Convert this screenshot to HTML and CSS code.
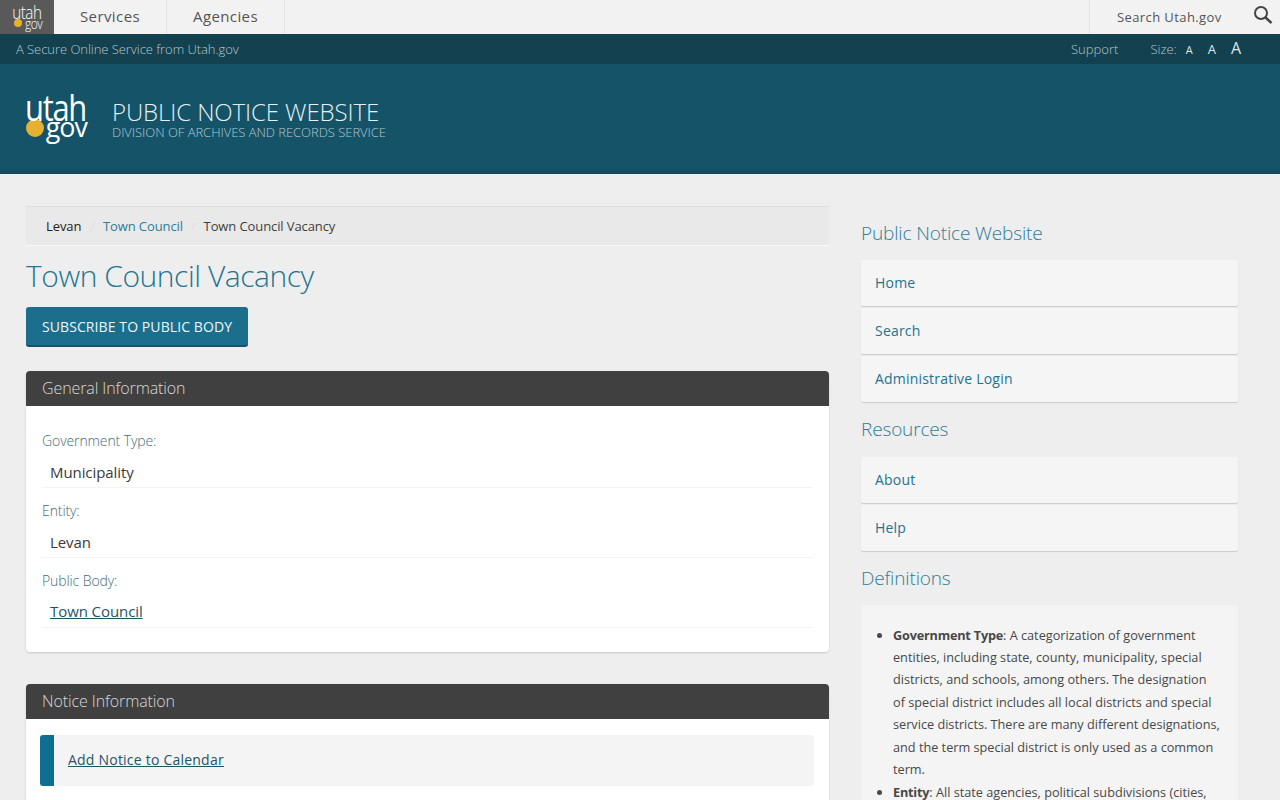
FILE: index.html
```html
<!DOCTYPE html>
<html lang="en">
<head>
  <meta charset="UTF-8">
  <title>Town Council Vacancy</title>
  <link rel="stylesheet" href="styles.css">
</head>
<body>
  <div class="topbar">
    <a class="top-logo" href="#">
      <span class="top-utah">utah</span>
      <span class="top-gov"><i class="dot"></i><span>gov</span></span>
    </a>
    <a class="top-link top-services" href="#">Services</a>
    <a class="top-link top-agencies" href="#">Agencies</a>
    <div class="top-search">
      <span>Search Utah.gov</span>
      <svg class="search-icon" width="20" height="20" viewBox="0 0 20 20">
        <circle cx="8" cy="8" r="6" fill="none" stroke="#444" stroke-width="2"/>
        <path d="M12.5 12.5L18.5 18" stroke="#444" stroke-width="2.4" fill="none"/>
      </svg>
    </div>
  </div>

  <div class="subbar">
    <span class="secure">A Secure Online Service from Utah.gov</span>
    <a class="support" href="#">Support</a>
    <span class="size-label">Size:</span>
    <a class="size size-s" href="#">A</a>
    <a class="size size-m" href="#">A</a>
    <a class="size size-l" href="#">A</a>
  </div>

  <header class="site-header">
    <a class="logo" href="#">
      <span class="logo-utah">utah</span>
      <span class="logo-gov"><i class="logo-dot"></i><span>gov</span></span>
    </a>
    <div class="site-title">
      <h1>PUBLIC NOTICE WEBSITE</h1>
      <p>DIVISION OF ARCHIVES AND RECORDS SERVICE</p>
    </div>
  </header>

  <div class="page">
    <main class="main">
      <ul class="breadcrumb">
        <li class="crumb-first">Levan</li>
        <li><a href="#">Town Council</a></li>
        <li>Town Council Vacancy</li>
      </ul>

      <h2 class="page-title">Town Council Vacancy</h2>
      <a class="btn" href="#">SUBSCRIBE TO PUBLIC BODY</a>

      <section class="panel">
        <h3 class="panel-head">General Information</h3>
        <div class="panel-body">
          <div class="field">
            <label>Government Type:</label>
            <div class="value">Municipality</div>
          </div>
          <div class="field">
            <label>Entity:</label>
            <div class="value">Levan</div>
          </div>
          <div class="field">
            <label>Public Body:</label>
            <div class="value"><a href="#">Town Council</a></div>
          </div>
        </div>
      </section>

      <section class="panel">
        <h3 class="panel-head">Notice Information</h3>
        <div class="panel-body notice-body">
          <div class="callout"><a href="#">Add Notice to Calendar</a></div>
        </div>
      </section>
    </main>

    <aside class="side">
      <h4 class="side-title">Public Notice Website</h4>
      <ul class="side-nav">
        <li><a href="#">Home</a></li>
        <li><a href="#">Search</a></li>
        <li><a href="#">Administrative Login</a></li>
      </ul>

      <h4 class="side-title">Resources</h4>
      <ul class="side-nav">
        <li><a href="#">About</a></li>
        <li><a href="#">Help</a></li>
      </ul>

      <h4 class="side-title">Definitions</h4>
      <div class="defs">
        <ul>
          <li><strong>Government Type</strong>: A categorization of government entities, including state, county, municipality, special districts, and schools, among others. The designation of&nbsp;special district includes all local districts and special service districts. There are many different designations, and the term special district is only used as a common term.</li>
          <li><strong>Entity</strong>: All state agencies, political subdivisions (cities,</li>
        </ul>
      </div>
    </aside>
  </div>
</body>
</html>
```

FILE: styles.css
```css
* {
  box-sizing: border-box;
}
html, body {
  margin: 0;
  height: 800px;
  overflow: hidden;
}
body {
  font-family: "Open Sans", sans-serif;
  background: #eeeeee;
  color: #3f3f3f;
  font-size: 14px;
}
a {
  text-decoration: none;
}

/* top bar */
.topbar {
  display: flex;
  height: 34px;
  background: #f3f2f2;
}
.top-logo {
  width: 54px;
  height: 34px;
  background: #595959;
  color: #fff;
  display: flex;
  flex-direction: column;
  align-items: flex-end;
  padding: 6px 13px 0 0;
  font-weight: 300;
}
.top-utah {
  font-size: 18px;
  line-height: 13px;
  letter-spacing: -.6px;
  transform: scaleX(.85);
  transform-origin: right;
}
.top-gov {
  width: 27px;
  font-size: 14px;
  line-height: 10px;
  display: flex;
  align-items: center;
  justify-content: space-between;
}
.top-gov span {
  letter-spacing: -.6px;
  transform: scaleX(.85);
  transform-origin: right;
}
.dot {
  flex: none;
  width: 8px;
  height: 8px;
  border-radius: 50%;
  background: #e8b02f;
  margin-top: -3px;
}
.top-link {
  color: #555;
  font-size: 15px;
  letter-spacing: .4px;
  line-height: 32px;
  text-align: center;
  border-right: 1px solid #e6e5e5;
}
.top-services {
  width: 113px;
}
.top-agencies {
  width: 118px;
}
.top-search {
  margin-left: auto;
  width: 191px;
  border-left: 1px solid #e6e5e5;
  display: flex;
  align-items: center;
  justify-content: space-between;
  padding: 0 7px 0 27px;
  font-size: 13px;
  letter-spacing: .4px;
  color: #555;
}
.search-icon {
  margin-top: -4px;
}

/* secure bar */
.subbar {
  display: flex;
  align-items: center;
  height: 30px;
  background: #13414f;
  color: #b5c6cc;
  font-size: 13px;
  font-weight: 300;
  padding-left: 16px;
}
.secure {
  letter-spacing: -.05px;
}
.support {
  margin-left: auto;
  margin-top: -1px;
  color: #b5c6cc;
  letter-spacing: .03px;
}
.size-label {
  margin-left: 32px;
  margin-top: -1px;
}
.size {
  color: #dbe6ea;
  font-weight: 400;
}
.size-s {
  font-size: 11px;
  margin-left: 9px;
}
.size-m {
  font-size: 13px;
  margin-left: 15px;
}
.size-l {
  font-size: 16px;
  margin-left: 15px;
  margin-right: 39px;
  margin-top: -2px;
}

/* header */
.site-header {
  display: flex;
  height: 110px;
  background: linear-gradient(#145368 95%, #124658);
  padding: 27px 0 0 26px;
}
.logo {
  width: 60px;
  height: 54px;
  margin-top: 2px;
  color: #fff;
  display: flex;
  flex-direction: column;
  align-items: flex-end;
}
.logo-utah {
  font-size: 36px;
  line-height: 30px;
  letter-spacing: -1.5px;
  transform: scaleX(.86);
  transform-origin: right;
}
.logo-gov {
  display: flex;
  align-items: center;
  width: 60px;
  justify-content: space-between;
  margin-top: -9px;
  line-height: 24px;
}
.logo-gov span {
  font-size: 28px;
  letter-spacing: -1px;
  margin-right: 1px;
  transform: scaleX(.96);
  transform-origin: right;
}
.logo-dot {
  flex: none;
  width: 18px;
  height: 18px;
  border-radius: 50%;
  background: #e8b02f;
  margin-top: 4px;
}
.site-title {
  margin-left: 26px;
  padding-top: 7px;
  font-weight: 300;
}
.site-title h1 {
  margin: 0;
  font-size: 24px;
  font-weight: 300;
  line-height: 28px;
  letter-spacing: -.1px;
  color: #e8f0f2;
}
.site-title p {
  margin: -3px 0 0;
  font-size: 13px;
  line-height: 18px;
  letter-spacing: -.04px;
  color: #b5c8ce;
}

/* page */
.page {
  display: flex;
  padding: 32px 42px 0 26px;
  gap: 32px;
}
.main {
  width: 803px;
}
.side {
  width: 377px;
  padding-top: 12px;
}

.breadcrumb {
  list-style: none;
  display: flex;
  margin: 0;
  height: 40px;
  align-items: center;
  padding: 0 0 0 20px;
  background: #e9e9e9;
  border-top: 1px solid #dedede;
  border-bottom: 1px solid #fafafa;
  font-size: 13px;
  letter-spacing: -.1px;
}
.breadcrumb li + li::before {
  content: "/";
  color: #e0e0e0;
  margin: 0 8px;
}
.crumb-first {
  color: #222;
  margin-right: 1px;
}
.breadcrumb a {
  color: #2d7d99;
}
.page-title {
  margin: 11px 0 12px;
  font-size: 30px;
  line-height: 38px;
  font-weight: 300;
  color: #237591;
  letter-spacing: -.45px;
}
.btn {
  display: inline-block;
  height: 40px;
  line-height: 39px;
  padding: 0 16px;
  background: #1b6f8c;
  border-bottom: 2px solid #145468;
  border-radius: 3px;
  color: #eef6f8;
  font-size: 14px;
  letter-spacing: .09px;
}

.panel {
  background: #fff;
  border-radius: 4px;
  margin-top: 24px;
  margin-bottom: 32px;
  box-shadow: 0 1px 2px rgba(0,0,0,0.15);
}
.panel-head {
  margin: 0;
  height: 35px;
  line-height: 34px;
  padding: 0 16px;
  background: #404040;
  border-radius: 4px 4px 0 0;
  color: #d9d9d9;
  font-size: 16px;
  font-weight: 300;
  letter-spacing: -.1px;
}
.panel-body {
  padding: 24px 16px 24px;
}
.field {
  margin-bottom: 12px;
}
.field:last-child {
  margin-bottom: 0;
}
.field label {
  display: block;
  font-size: 14px;
  font-weight: 300;
  line-height: 22px;
  color: #486a78;
  letter-spacing: -.1px;
}
.value {
  font-size: 15px;
  line-height: 24px;
  padding: 8px 8px 3px;
  border-bottom: 1px solid #f4f4f4;
  color: #3a3a3a;
  letter-spacing: -.08px;
}
.field:last-child .value {
  padding: 7px 8px 4px;
}
.value a {
  color: #1f5468;
  text-decoration: underline;
}
.panel + .panel {
  margin-top: 0;
}
.notice-body {
  padding: 16px 15px 16px 14px;
  min-height: 200px;
}
.callout {
  height: 51px;
  line-height: 50px;
  padding-left: 14px;
  background: #f4f4f4;
  border-left: 14px solid #0f6f92;
  border-radius: 3px;
  font-size: 14px;
  letter-spacing: .22px;
}
.callout a {
  color: #1f5468;
  text-decoration: underline;
}

/* sidebar */
.side-title {
  margin: 0 0 12.3px;
  font-size: 19px;
  line-height: 30px;
  font-weight: 300;
  color: #2d7d99;
  letter-spacing: -.15px;
}
.side-nav {
  list-style: none;
  margin: 0 0 12.1px;
  padding: 0;
}
.side-nav li {
  height: 46px;
  margin-bottom: 2px;
  padding-left: 14px;
  line-height: 45px;
  background: #f5f5f5;
  border-radius: 2px;
  box-shadow: 0 1px 1px rgba(0,0,0,0.15);
}
.side-nav a {
  color: #1d7391;
  font-size: 14px;
  letter-spacing: .2px;
}
.defs {
  background: #f4f4f4;
  border-radius: 3px;
  padding: 18.6px 12px 20px 0;
  font-size: 12.7px;
  line-height: 22.4px;
  min-height: 300px;
  color: #484848;
}
.defs ul {
  margin: 0;
  padding-left: 32px;
}
.defs strong {
  font-weight: 700;
  letter-spacing: -.2px;
}
```
